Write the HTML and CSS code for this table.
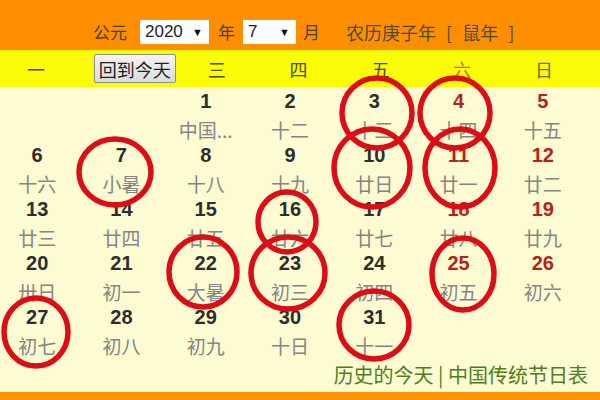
FILE: index.html
```html
<!DOCTYPE html>
<html lang="zh">
<head>
<meta charset="utf-8">
<link rel="stylesheet" href="styles.css">
</head>
<body>
<div class="cal">
  <div class="topbar">
    <span class="lbl l1">公元</span>
    <span class="sel s-year"><span>2020</span><span class="arr">▼</span></span>
    <span class="lbl l2">年</span>
    <span class="sel s-mon"><span>7</span><span class="arr">▼</span></span>
    <span class="lbl l3">月</span>
    <span class="lbl l4">农历庚子年 [ 鼠年 ]</span>
  </div>
  <div class="week">
    <div class="wd">一</div>
    <div class="wd"><button class="today">回到今天</button></div>
    <div class="wd">三</div>
    <div class="wd">四</div>
    <div class="wd">五</div>
    <div class="wd sat">六</div>
    <div class="wd sun">日</div>
  </div>
  <div class="days">
    <div class="d"></div><div class="d"></div>
    <div class="d"><b>1</b><i>中国...</i></div>
    <div class="d"><b>2</b><i>十二</i></div>
    <div class="d"><b>3</b><i>十三</i></div>
    <div class="d we"><b>4</b><i>十四</i></div>
    <div class="d we"><b>5</b><i>十五</i></div>

    <div class="d"><b>6</b><i>十六</i></div>
    <div class="d"><b>7</b><i>小暑</i></div>
    <div class="d"><b>8</b><i>十八</i></div>
    <div class="d"><b>9</b><i>十九</i></div>
    <div class="d"><b>10</b><i>廿日</i></div>
    <div class="d we"><b>11</b><i>廿一</i></div>
    <div class="d we"><b>12</b><i>廿二</i></div>

    <div class="d"><b>13</b><i>廿三</i></div>
    <div class="d"><b>14</b><i>廿四</i></div>
    <div class="d"><b>15</b><i>廿五</i></div>
    <div class="d"><b>16</b><i>廿六</i></div>
    <div class="d"><b>17</b><i>廿七</i></div>
    <div class="d we"><b>18</b><i>廿八</i></div>
    <div class="d we"><b>19</b><i>廿九</i></div>

    <div class="d"><b>20</b><i>卅日</i></div>
    <div class="d"><b>21</b><i>初一</i></div>
    <div class="d"><b>22</b><i>大暑</i></div>
    <div class="d"><b>23</b><i>初三</i></div>
    <div class="d"><b>24</b><i>初四</i></div>
    <div class="d we"><b>25</b><i>初五</i></div>
    <div class="d we"><b>26</b><i>初六</i></div>

    <div class="d"><b>27</b><i>初七</i></div>
    <div class="d"><b>28</b><i>初八</i></div>
    <div class="d"><b>29</b><i>初九</i></div>
    <div class="d"><b>30</b><i>十日</i></div>
    <div class="d"><b>31</b><i>十一</i></div>
  </div>
  <div class="foot"><span>历史的今天</span> | <span>中国传统节日表</span></div>
  <div class="bottom"></div>
  <svg class="marks" width="600" height="400" viewBox="0 0 600 400">
    <g fill="none" stroke="#dc0d16" stroke-width="5.5">
      <ellipse cx="377" cy="113" rx="35" ry="35"/>
      <ellipse cx="455" cy="113" rx="35" ry="35"/>
      <ellipse cx="372" cy="168" rx="38" ry="39"/>
      <ellipse cx="460" cy="168" rx="35" ry="39"/>
      <ellipse cx="115" cy="172" rx="36" ry="33"/>
      <ellipse cx="287" cy="222" rx="29" ry="30"/>
      <ellipse cx="203" cy="272" rx="34" ry="35"/>
      <ellipse cx="288" cy="273" rx="37" ry="36"/>
      <ellipse cx="463" cy="274" rx="31" ry="36"/>
      <ellipse cx="36" cy="332" rx="32" ry="34"/>
      <ellipse cx="374" cy="325" rx="35" ry="34"/>
    </g>
  </svg>
</div>
</body>
</html>
```
FILE: styles.css
```css
* { box-sizing: border-box; }
html, body { margin: 0; padding: 0; }
body { width: 600px; height: 400px; overflow: hidden; background: #fdfbd2; }
.cal {
  position: relative;
  width: 600px;
  height: 400px;
  font-family: "Noto Sans CJK SC", "Liberation Sans", sans-serif;
  background: #fdfbd2;
  overflow: hidden;
}
.topbar {
  height: 50px;
  background: #fd8e02;
  display: flex;
  align-items: center;
  padding: 14px 0 0 93px;
  font-size: 17px;
  color: #4a3d16;
}
.lbl { line-height: 24px; }
.l1 { margin-right: 13px; }
.l2 { margin: 0 8px 0 9px; }
.l3 { margin-left: 7px; }
.l4 { margin-left: 26px; color: #4f4a2a; word-spacing: 6px; font-size: 18px; }
.sel {
  display: flex;
  justify-content: space-between;
  align-items: center;
  height: 24px;
  background: #fff;
  padding: 0 6px 0 5px;
  font-family: "Liberation Sans", sans-serif;
  font-size: 17px;
  color: #222;
}
.s-year { width: 69px; }
.s-mon { width: 53px; }
.arr { font-size: 11px; color: #111; }
.week {
  height: 37px;
  background: #fcfb08;
  display: grid;
  grid-template-columns: repeat(7, 1fr);
  width: 605px;
  margin-left: -5px;
  padding-right: 15px;
  align-items: center;
  font-size: 18px;
  color: #4d4a18;
}
.wd { text-align: center; }
.wd.sat { color: #b77120; }
.wd.sun { color: #7f6510; }
.today {
  display: block;
  margin-left: 17px;
  width: 82px;
  height: 29px;
  padding: 0;
  font-family: "Noto Sans CJK SC", sans-serif;
  font-size: 18px;
  line-height: 26px;
  color: #222;
  background: linear-gradient(#f4f4f4, #dcdcdc);
  border: 1px solid #8d8d8d;
  border-radius: 2px;
  white-space: nowrap;
}
.days {
  display: grid;
  grid-template-columns: repeat(7, 1fr);
  grid-auto-rows: 54px;
  width: 590px;
  margin-left: -5px;
}
.d { display: flex; flex-direction: column; align-items: center; }
.d b {
  font-family: "Liberation Sans", sans-serif;
  font-weight: bold;
  font-size: 20px;
  line-height: 28px;
  color: #2d2d2d;
}
.d i {
  font-style: normal;
  font-size: 19px;
  line-height: 22px;
  margin-top: 4px;
  color: #858585;
}
.d.we b { color: #b2231f; }
.foot {
  height: 35px;
  padding: 5px 12px 0 0;
  text-align: right;
  font-size: 20px;
  line-height: 26px;
  color: #4e7f1c;
}
.bottom { height: 8px; background: #fd9407; }
.marks { position: absolute; left: 0; top: 0; pointer-events: none; }
```
